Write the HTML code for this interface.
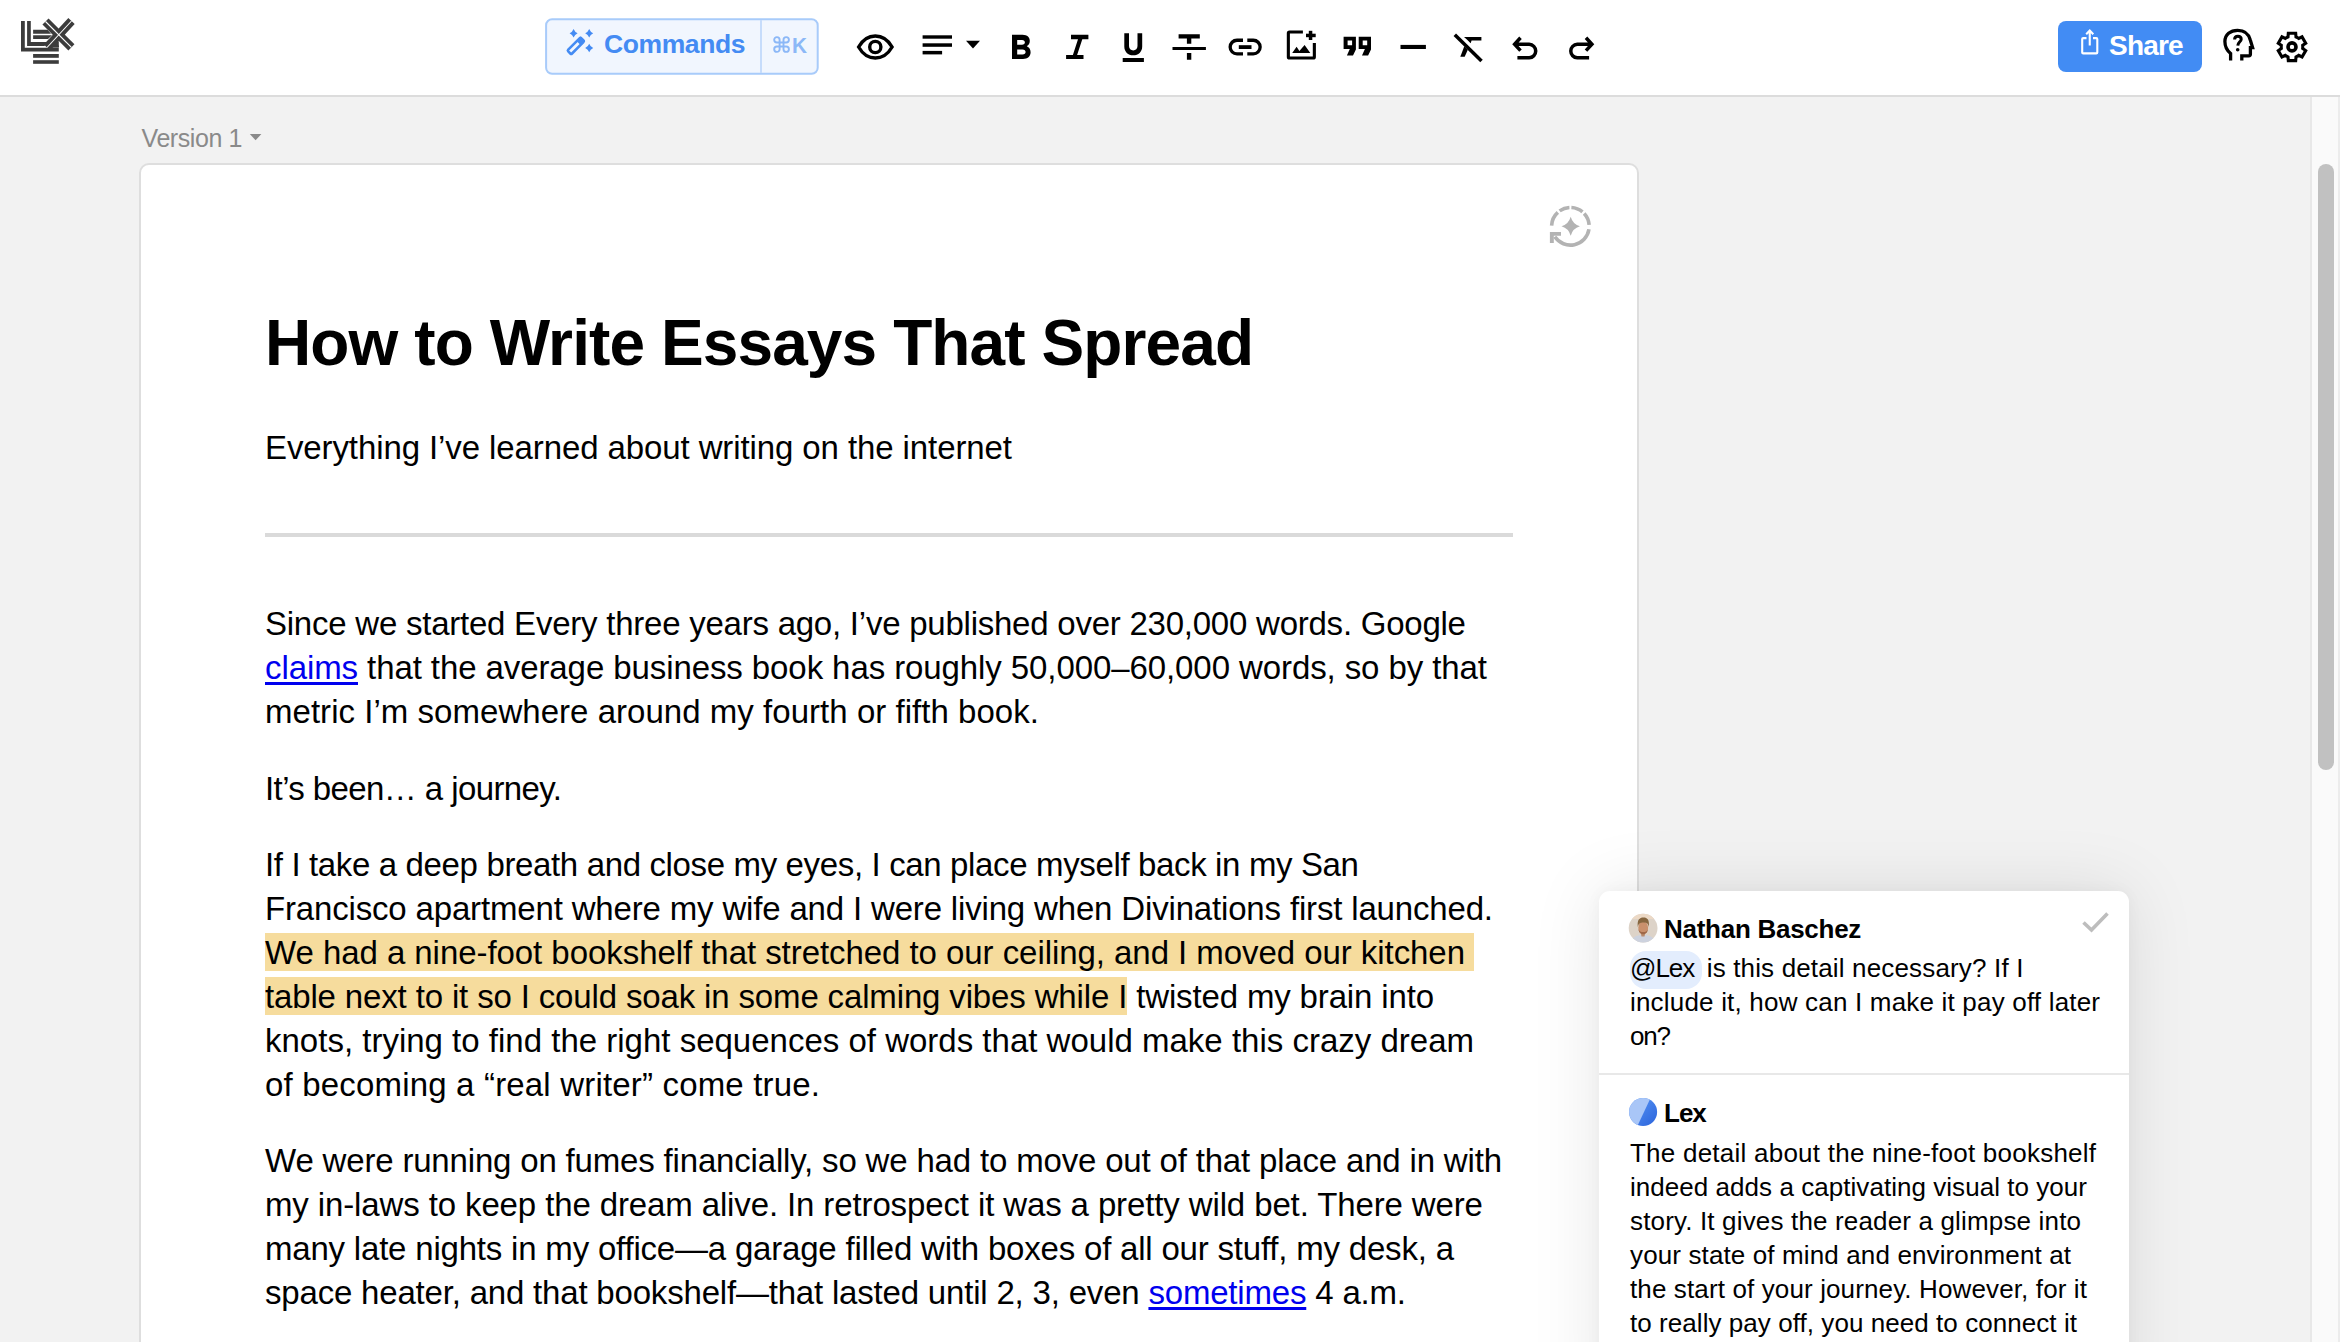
<!DOCTYPE html>
<html><head><meta charset="utf-8"><title>Lex</title>
<style>
*{box-sizing:border-box;margin:0;padding:0}
html,body{width:2340px;height:1342px;overflow:hidden;background:#f2f2f2;font-family:"Liberation Sans",sans-serif;color:#000}
.abs{position:absolute}
.ln{position:absolute;white-space:pre;color:#000}
a{color:#0000ee;text-decoration:underline;text-decoration-thickness:3px;text-underline-offset:3px}
.hl{background:#f6dc9d;padding:0.5px 0 0.5px 0}
.chip{background:#e3edfd;border-radius:16px;padding:2px 8px 6px 0;letter-spacing:-1px;margin-right:-3px}
</style></head><body>
<!-- toolbar -->
<div class="abs" style="left:0;top:0;width:2340px;height:95px;background:#fff"></div>
<div class="abs" style="left:0;top:95px;width:2340px;height:2px;background:#dcdcdc"></div>
<!-- scrollbar -->
<div class="abs" style="left:2310px;top:97px;width:30px;height:1245px;background:#fafafa;border-left:2px solid #e8e8e8;border-right:2px solid #ececec"></div>
<div class="abs" style="left:2318px;top:164px;width:16px;height:606px;background:#c1c1c1;border-radius:8px"></div>
<!-- version -->
<div class="abs" style="left:141.5px;top:123.4px;font-size:25px;line-height:30px;letter-spacing:-0.42px;color:#8a8a8a;white-space:pre">Version 1</div>
<svg class="abs" style="left:0;top:0" width="2340" height="1342" viewBox="0 0 2340 1342">
 <path d="M249.8,134.1 H261.4 L255.6,140.3 Z" fill="#8a8a8a"/>
</svg>
<!-- card -->
<div class="abs" style="left:139px;top:163.3px;width:1500px;height:1300px;background:#fff;border:2px solid #dedede;border-radius:10px"></div>
<div class="abs" style="left:265px;top:533px;width:1248px;height:4px;background:#dadada"></div>
<div class="ln " style="left:265px;top:302.81px;height:80px;font:bold 64px 'Liberation Sans';line-height:80px;letter-spacing:-0.899px;">How to Write Essays That Spread</div>
<div class="ln " style="left:265px;top:425.86px;height:44px;font:33px 'Liberation Sans';line-height:44px;letter-spacing:-0.099px;">Everything I’ve learned about writing on the internet</div>
<div class="ln " style="left:265px;top:601.96px;height:44px;font:33px 'Liberation Sans';line-height:44px;letter-spacing:-0.236px;">Since we started Every three years ago, I’ve published over 230,000 words. Google</div>
<div class="ln " style="left:265px;top:645.86px;height:44px;font:33px 'Liberation Sans';line-height:44px;letter-spacing:-0.089px;"><a>claims</a> that the average business book has roughly 50,000–60,000 words, so by that</div>
<div class="ln " style="left:265px;top:689.76px;height:44px;font:33px 'Liberation Sans';line-height:44px;letter-spacing:0.036px;">metric I’m somewhere around my fourth or fifth book.</div>
<div class="ln " style="left:265px;top:766.56px;height:44px;font:33px 'Liberation Sans';line-height:44px;letter-spacing:-0.590px;">It’s been… a journey.</div>
<div class="ln " style="left:265px;top:843.06px;height:44px;font:33px 'Liberation Sans';line-height:44px;letter-spacing:-0.357px;">If I take a deep breath and close my eyes, I can place myself back in my San</div>
<div class="ln " style="left:265px;top:887.06px;height:44px;font:33px 'Liberation Sans';line-height:44px;letter-spacing:-0.165px;">Francisco apartment where my wife and I were living when Divinations first launched.</div>
<div class="ln " style="left:265px;top:930.86px;height:44px;font:33px 'Liberation Sans';line-height:44px;letter-spacing:-0.056px;"><span class="hl">We had a nine-foot bookshelf that stretched to our ceiling, and I moved our kitchen </span></div>
<div class="ln " style="left:265px;top:974.86px;height:44px;font:33px 'Liberation Sans';line-height:44px;letter-spacing:-0.147px;"><span class="hl">table next to it so I could soak in some calming vibes while I</span> twisted my brain into</div>
<div class="ln " style="left:265px;top:1019.06px;height:44px;font:33px 'Liberation Sans';line-height:44px;letter-spacing:0.003px;">knots, trying to find the right sequences of words that would make this crazy dream</div>
<div class="ln " style="left:265px;top:1063.16px;height:44px;font:33px 'Liberation Sans';line-height:44px;letter-spacing:0.179px;">of becoming a “real writer” come true.</div>
<div class="ln " style="left:265px;top:1139.16px;height:44px;font:33px 'Liberation Sans';line-height:44px;letter-spacing:-0.174px;">We were running on fumes financially, so we had to move out of that place and in with</div>
<div class="ln " style="left:265px;top:1183.16px;height:44px;font:33px 'Liberation Sans';line-height:44px;letter-spacing:-0.121px;">my in-laws to keep the dream alive. In retrospect it was a pretty wild bet. There were</div>
<div class="ln " style="left:265px;top:1227.16px;height:44px;font:33px 'Liberation Sans';line-height:44px;letter-spacing:-0.199px;">many late nights in my office—a garage filled with boxes of all our stuff, my desk, a</div>
<div class="ln " style="left:265px;top:1271.16px;height:44px;font:33px 'Liberation Sans';line-height:44px;letter-spacing:-0.191px;">space heater, and that bookshelf—that lasted until 2, 3, even <a>sometimes</a> 4 a.m.</div>

<!-- comment panel -->
<div class="abs" style="left:1599px;top:891px;width:530px;height:520px;background:#fff;border-radius:11px;box-shadow:0 0 70px rgba(0,0,0,0.10),0 0 16px rgba(0,0,0,0.04)"></div>
<div class="abs" style="left:1599px;top:1073px;width:530px;height:2px;background:#e8e8e8"></div>
<div class="abs" style="left:1664px;top:909.2px;font:bold 26px 'Liberation Sans';line-height:40px;letter-spacing:-0.27px;white-space:pre">Nathan Baschez</div>
<div class="abs" style="left:1664px;top:1092.9px;font:bold 26px 'Liberation Sans';line-height:40px;letter-spacing:-1px;white-space:pre">Lex</div>
<div class="ln " style="left:1630px;top:951.19px;height:34px;font:26px 'Liberation Sans';line-height:34px;letter-spacing:0.156px;"><span class="chip">@Lex</span> is this detail necessary? If I</div>
<div class="ln " style="left:1630px;top:985.29px;height:34px;font:26px 'Liberation Sans';line-height:34px;letter-spacing:0.191px;">include it, how can I make it pay off later</div>
<div class="ln " style="left:1630px;top:1019.39px;height:34px;font:26px 'Liberation Sans';line-height:34px;letter-spacing:-1.195px;">on?</div>
<div class="ln " style="left:1630px;top:1135.59px;height:34px;font:26px 'Liberation Sans';line-height:34px;letter-spacing:0.237px;">The detail about the nine-foot bookshelf</div>
<div class="ln " style="left:1630px;top:1169.69px;height:34px;font:26px 'Liberation Sans';line-height:34px;letter-spacing:0.044px;">indeed adds a captivating visual to your</div>
<div class="ln " style="left:1630px;top:1203.79px;height:34px;font:26px 'Liberation Sans';line-height:34px;letter-spacing:0.159px;">story. It gives the reader a glimpse into</div>
<div class="ln " style="left:1630px;top:1237.89px;height:34px;font:26px 'Liberation Sans';line-height:34px;letter-spacing:0.126px;">your state of mind and environment at</div>
<div class="ln " style="left:1630px;top:1271.99px;height:34px;font:26px 'Liberation Sans';line-height:34px;letter-spacing:0.126px;">the start of your journey. However, for it</div>
<div class="ln " style="left:1630px;top:1306.09px;height:34px;font:26px 'Liberation Sans';line-height:34px;letter-spacing:0.057px;">to really pay off, you need to connect it</div>

<svg class="abs" style="left:0;top:0" width="2340" height="1342" viewBox="0 0 2340 1342">
 <defs>
  <clipPath id="av"><circle cx="1643.1" cy="928.1" r="14.4"/></clipPath>
  <linearGradient id="lexg" x1="0" y1="0" x2="1" y2="1"><stop offset="0" stop-color="#5d9bf7"/><stop offset="1" stop-color="#2a62db"/></linearGradient>
  <clipPath id="lexc"><circle cx="1643.1" cy="1112" r="14"/></clipPath>
 </defs>
 <!-- avatar -->
 <g clip-path="url(#av)">
  <rect x="1628" y="913" width="30" height="30" fill="#ddd3c8"/>
  <rect x="1628" y="913" width="30" height="6" fill="#ecd9c6"/>
  <path d="M1631,943 C1632,937 1636,935 1643,935 C1650,935 1654,937 1655,943 Z" fill="#cdd2de"/>
  <path d="M1640.5,932 L1645.5,932 L1644.5,936.5 L1641.5,936.5 Z" fill="#b98a6c"/>
  <ellipse cx="1643.2" cy="927.8" rx="4.9" ry="6.3" fill="#c9906c"/>
  <path d="M1638.3,929 C1639,933 1641,934.2 1643.2,934.2 C1645.4,934.2 1647.4,933 1648.1,929 C1647,931.5 1645.5,932 1643.2,932 C1641,932 1639.4,931.5 1638.3,929 Z" fill="#a06848"/>
  <path d="M1637.8,927 C1637,920 1639.5,917.6 1643.4,917.6 C1647.5,917.6 1649.6,920 1648.8,927 C1648.3,923.5 1646.8,922.3 1643.4,922.5 C1640,922.6 1638.6,923.5 1637.8,927 Z" fill="#86663f"/>
 </g>
 <g clip-path="url(#lexc)">
  <rect x="1628" y="1097" width="30" height="30" fill="url(#lexg)"/>
  <path d="M1628,1097 H1651 L1636.5,1128 H1628 Z" fill="#a9c6f7"/>
 </g>
 <path d="M2083.5,922.5 L2091.5,930 L2107.5,913.5" fill="none" stroke="#bdbdbd" stroke-width="3.6"/>
 <!-- AI icon -->
 <g fill="none" stroke="#b3b3b3" stroke-width="3.6">
  <path d="M1571.38,207.53 A18.8,18.8 0 0 1 1582.48,211.90 M1584.15,213.48 A18.8,18.8 0 0 1 1589.15,224.99 M1588.97,229.24 A18.8,18.8 0 0 1 1554.81,236.81 M1551.61,225.64 A18.8,18.8 0 0 1 1557.82,212.33 M1559.62,210.90 A18.8,18.8 0 0 1 1569.42,207.53"/>
 </g>
 <path d="M1549.9,231.9 H1561 V235.8 H1553.8 V243 H1549.9 Z" fill="#b3b3b3"/>
 <path d="M1570.7,216.8 Q1572.724,224.21 1579.9,226.3 Q1572.724,228.39000000000001 1570.7,235.8 Q1568.6760000000002,228.39000000000001 1561.5,226.3 Q1568.6760000000002,224.21 1570.7,216.8 Z" fill="#b3b3b3"/>

 <!-- logo -->
 <g fill="#3c3c3c">
  <path d="M21,20.9 H24.8 V47.7 H58.8 V51.6 H21 Z"/>
  <path d="M27.1,20.9 H30.8 V42 H47 L44.5,45.9 H27.1 Z"/>
  <path d="M33.1,29.8 H47.5 L51,33.7 H33.1 Z"/>
  <path d="M33.1,35.2 H52 L48,39 H33.1 Z"/>
  <path d="M52,45.5 H58.8 V47.2 H50.5 Z"/>
  <path d="M52.5,41.5 H58.8 V47.5 H50 Z"/>
  <rect x="33.1" y="54" width="25.7" height="3.8"/>
  <rect x="33.1" y="60.2" width="25.7" height="3.6"/>
 </g>
 <g stroke="#3c3c3c" stroke-width="8.6" stroke-linecap="butt">
  <line x1="45.5" y1="21.5" x2="71.4" y2="47.4"/>
  <line x1="71.5" y1="21" x2="47" y2="47.5"/>
 </g>
 <g stroke="#fff" stroke-width="1.1">
  <line x1="45.5" y1="21.5" x2="71.4" y2="47.4"/>
  <line x1="71.5" y1="21" x2="47" y2="47.5"/>
 </g>

 <!-- commands button -->
 <rect x="546.1" y="19.3" width="271.6" height="54.4" rx="6" fill="#f1f6fe" stroke="#a8cbfa" stroke-width="2"/>
 <rect x="760" y="20" width="2" height="53" fill="#c6dcfb"/>
 <g fill="#448bf3">
  <g transform="rotate(-45 575.8 45.9)">
   <rect x="566.6" y="43.2" width="18.4" height="5.4" rx="1.2" fill="none" stroke="#448bf3" stroke-width="2.6"/>
   <rect x="579.8" y="42.6" width="6.4" height="6.6" rx="1"/>
  </g>
  <path d="M573.6,28.999999999999996 Q574.8000000000001,32.01 577.6,33.3 Q574.8000000000001,34.589999999999996 573.6,37.599999999999994 Q572.4,34.589999999999996 569.6,33.3 Q572.4,32.01 573.6,28.999999999999996 Z"/>
  <path d="M589.2,28.999999999999996 Q590.4000000000001,32.01 593.2,33.3 Q590.4000000000001,34.589999999999996 589.2,37.599999999999994 Q588.0,34.589999999999996 585.2,33.3 Q588.0,32.01 589.2,28.999999999999996 Z"/>
  <path d="M589.2,43.7 Q590.4000000000001,46.71 593.2,48.0 Q590.4000000000001,49.29 589.2,52.3 Q588.0,49.29 585.2,48.0 Q588.0,46.71 589.2,43.7 Z"/>
 </g>
 <path transform="translate(0 0.35)" d="M779.6,42.2 V39.5 A2.7,2.7 0 1 0 776.9,42.2 H786.2 A2.7,2.7 0 1 0 783.5,39.5 V48.8 A2.7,2.7 0 1 0 786.2,46.1 H776.9 A2.7,2.7 0 1 0 779.6,48.8 Z" fill="none" stroke="#8cb8f7" stroke-width="1.9"/>
 <!-- toolbar icons -->
 <g fill="none" stroke="#000" stroke-width="3.4">
  <path d="M858.6,47 C863.5,38.5 869,36 875.3,36 C881.6,36 887.2,38.5 892.1,47 C887.2,55.5 881.6,58 875.3,58 C869,58 863.5,55.5 858.6,47 Z"/>
  <circle cx="875.3" cy="47" r="5.6"/>
 </g>
 <g fill="#000">
  <rect x="922.6" y="35.3" width="29.4" height="3.4"/>
  <rect x="922.6" y="43.3" width="29.4" height="3.5"/>
  <rect x="922.6" y="50.9" width="19.5" height="3.5"/>
  <path d="M966,40.8 H980 L973,48.5 Z"/>
  <path fill-rule="evenodd" d="M1012,34.7 H1022.5 C1027.5,34.7 1029.8,37.5 1029.8,41 C1029.8,43.5 1028.5,45.2 1026.8,46.3 C1029.2,47.3 1030.6,49.5 1030.6,52.3 C1030.6,56.5 1027.5,59 1023,59 H1012 Z M1017.2,40 H1022 C1023.8,40 1024.9,41 1024.9,42.35 C1024.9,43.7 1023.8,44.7 1022,44.7 H1017.2 Z M1017.2,49.6 H1022.5 C1024.5,49.6 1025.6,50.7 1025.6,52.1 C1025.6,53.5 1024.5,54.6 1022.5,54.6 H1017.2 Z"/>
  <path d="M1071,34.7 H1088.4 V39.3 H1082.3 L1077.1,54.9 H1083.5 V59 H1066.1 V54.9 H1072.9 L1078,39.3 H1071 Z"/>
  <path d="M1124.3,33.3 H1129 V46 C1129,48.6 1130.8,50.4 1133.25,50.4 C1135.7,50.4 1137.5,48.6 1137.5,46 V33.3 H1142.2 V46.5 C1142.2,51.8 1138.5,55.3 1133.25,55.3 C1128,55.3 1124.3,51.8 1124.3,46.5 Z M1122.7,57.9 H1143.9 V61.9 H1122.7 Z"/>
  <path d="M1178.6,34.2 H1199.8 V38.6 H1191.3 V43.8 H1186.9 V38.6 H1178.6 Z M1172.5,46.9 H1205.9 V50.1 H1172.5 Z M1186.9,53 H1191.3 V59.8 H1186.9 Z"/>
  <path d="M1243,38.6 H1237 A8.5,8.5 0 0 0 1237,55.6 H1243 V52.3 H1237 A5.2,5.2 0 0 1 1237,41.9 H1243 Z"/>
  <path d="M1247.3,38.6 H1253.3 A8.5,8.5 0 0 1 1253.3,55.6 H1247.3 V52.3 H1253.3 A5.2,5.2 0 0 0 1253.3,41.9 H1247.3 Z"/>
  <rect x="1238.8" y="45.2" width="12.7" height="3.8"/>
  <path d="M1302.9,30.5 H1289.5 Q1286.8,30.5 1286.8,33.2 V56.9 Q1286.8,59.6 1289.5,59.6 H1313.2 Q1315.9,59.6 1315.9,56.9 V42.9 H1312.8 V56.5 H1289.9 V33.6 H1302.9 Z"/>
  <rect x="1308.8" y="30.8" width="3.5" height="9.2"/>
  <rect x="1306" y="33.7" width="9.7" height="3.5"/>
  <path d="M1292.2,53 L1296.6,46.8 L1299.4,50.9 L1304.6,44.9 L1310.3,53 Z"/>
  <path fill-rule="evenodd" d="M1343.6,36.8 H1355.9 V49.5 L1353,55.6 H1346.9 L1349.8,49 H1343.6 Z M1347.6,40.5 H1352.1 V45.2 H1347.6 Z"/>
  <path fill-rule="evenodd" d="M1358.7,36.8 H1371 V49.5 L1368.1,55.6 H1362 L1364.9,49 H1358.7 Z M1362.7,40.5 H1367.2 V45.2 H1362.7 Z"/>
  <rect x="1400.5" y="44.9" width="25.4" height="4.1"/>
  <path d="M1464,37 H1481.4 V40.6 H1471.6 L1470.6,43.2 L1467.4,40 Z"/>
  <path d="M1464.3,46.3 L1467.8,49.7 L1464.7,56.7 H1460.3 Z"/>
 </g>
 <g fill="none" stroke="#000" stroke-width="3.5">
  <line x1="1454.8" y1="34.7" x2="1481.5" y2="61.1"/>
  <path d="M1520.5,37.8 L1514.6,44.3 L1520.5,50.6 M1515.5,44.3 H1529.2 A6.78,6.78 0 0 1 1529.2,57.85 H1517.4"/>
  <path d="M1586,37.8 L1591.9,44.3 L1586,50.6 M1591,44.3 H1577.3 A6.78,6.78 0 0 0 1577.3,57.85 H1589.1"/>
 </g>
 <!-- share -->
 <rect x="2058" y="21" width="144" height="51" rx="8" fill="#428cf4"/>
 <g fill="none" stroke="#fff" stroke-width="2.1">
  <path d="M2086.5,38.1 H2083.2 A1,1 0 0 0 2082.2,39.1 V52.4 A1,1 0 0 0 2083.2,53.4 H2096.3 A1,1 0 0 0 2097.3,52.4 V39.1 A1,1 0 0 0 2096.3,38.1 H2093"/>
  <path d="M2089.75,45.6 V31 M2086.2,34.2 L2089.75,30.6 L2093.3,34.2"/>
 </g>
 <!-- help head -->
 <g fill="none" stroke="#000" stroke-width="3.3">
  <path d="M2230.6,60.6 V53.6 C2226.6,50.2 2224.9,46 2224.9,41.5 C2224.9,34.5 2230.4,30.3 2237.6,30.3 C2244.2,30.3 2248.8,34 2250.3,40 L2252.6,47.6 H2250.4 V54 C2250.4,55.2 2249.8,55.8 2248.8,55.8 H2241.8 V60.6"/>
  <path d="M2234.6,39.4 C2234.6,37.4 2236,36.2 2237.9,36.2 C2239.9,36.2 2241.2,37.4 2241.2,39.2 C2241.2,41.6 2238.0,42.2 2237.8,45.6" stroke-width="3"/>
 </g>
 <circle cx="2237.7" cy="49.8" r="1.8" fill="#000"/>
 <!-- gear -->
 <path d="M2286.60,37.55 L2288.00,36.87 L2288.32,33.18 L2295.68,33.18 L2296.00,36.87 L2297.40,37.55 L2298.69,38.42 L2302.04,36.86 L2305.72,43.22 L2302.69,45.35 L2302.80,46.90 L2302.69,48.45 L2305.72,50.58 L2302.04,56.94 L2298.69,55.38 L2297.40,56.25 L2296.00,56.93 L2295.68,60.62 L2288.32,60.62 L2288.00,56.93 L2286.60,56.25 L2285.31,55.38 L2281.96,56.94 L2278.28,50.58 L2281.31,48.45 L2281.20,46.90 L2281.31,45.35 L2278.28,43.22 L2281.96,36.86 L2285.31,38.42 Z" fill="none" stroke="#000" stroke-width="3.1" stroke-linejoin="miter"/>
 <circle cx="2292" cy="46.9" r="4.0" fill="none" stroke="#000" stroke-width="3.6"/>
</svg>
<div class="abs" style="left:604px;top:26px;font:bold 26.5px 'Liberation Sans';line-height:36px;letter-spacing:-0.4px;color:#448bf3;white-space:pre">Commands</div>
<div class="abs" style="left:792px;top:29.96px;font:bold 22.6px 'Liberation Sans';line-height:32px;color:#8cb8f7;white-space:pre;transform:scaleX(0.92);transform-origin:0 0">K</div>
<div class="abs" style="left:2109px;top:28.2px;font:bold 28px 'Liberation Sans';line-height:36px;letter-spacing:-0.8px;color:#fff;white-space:pre">Share</div>
</body></html>
